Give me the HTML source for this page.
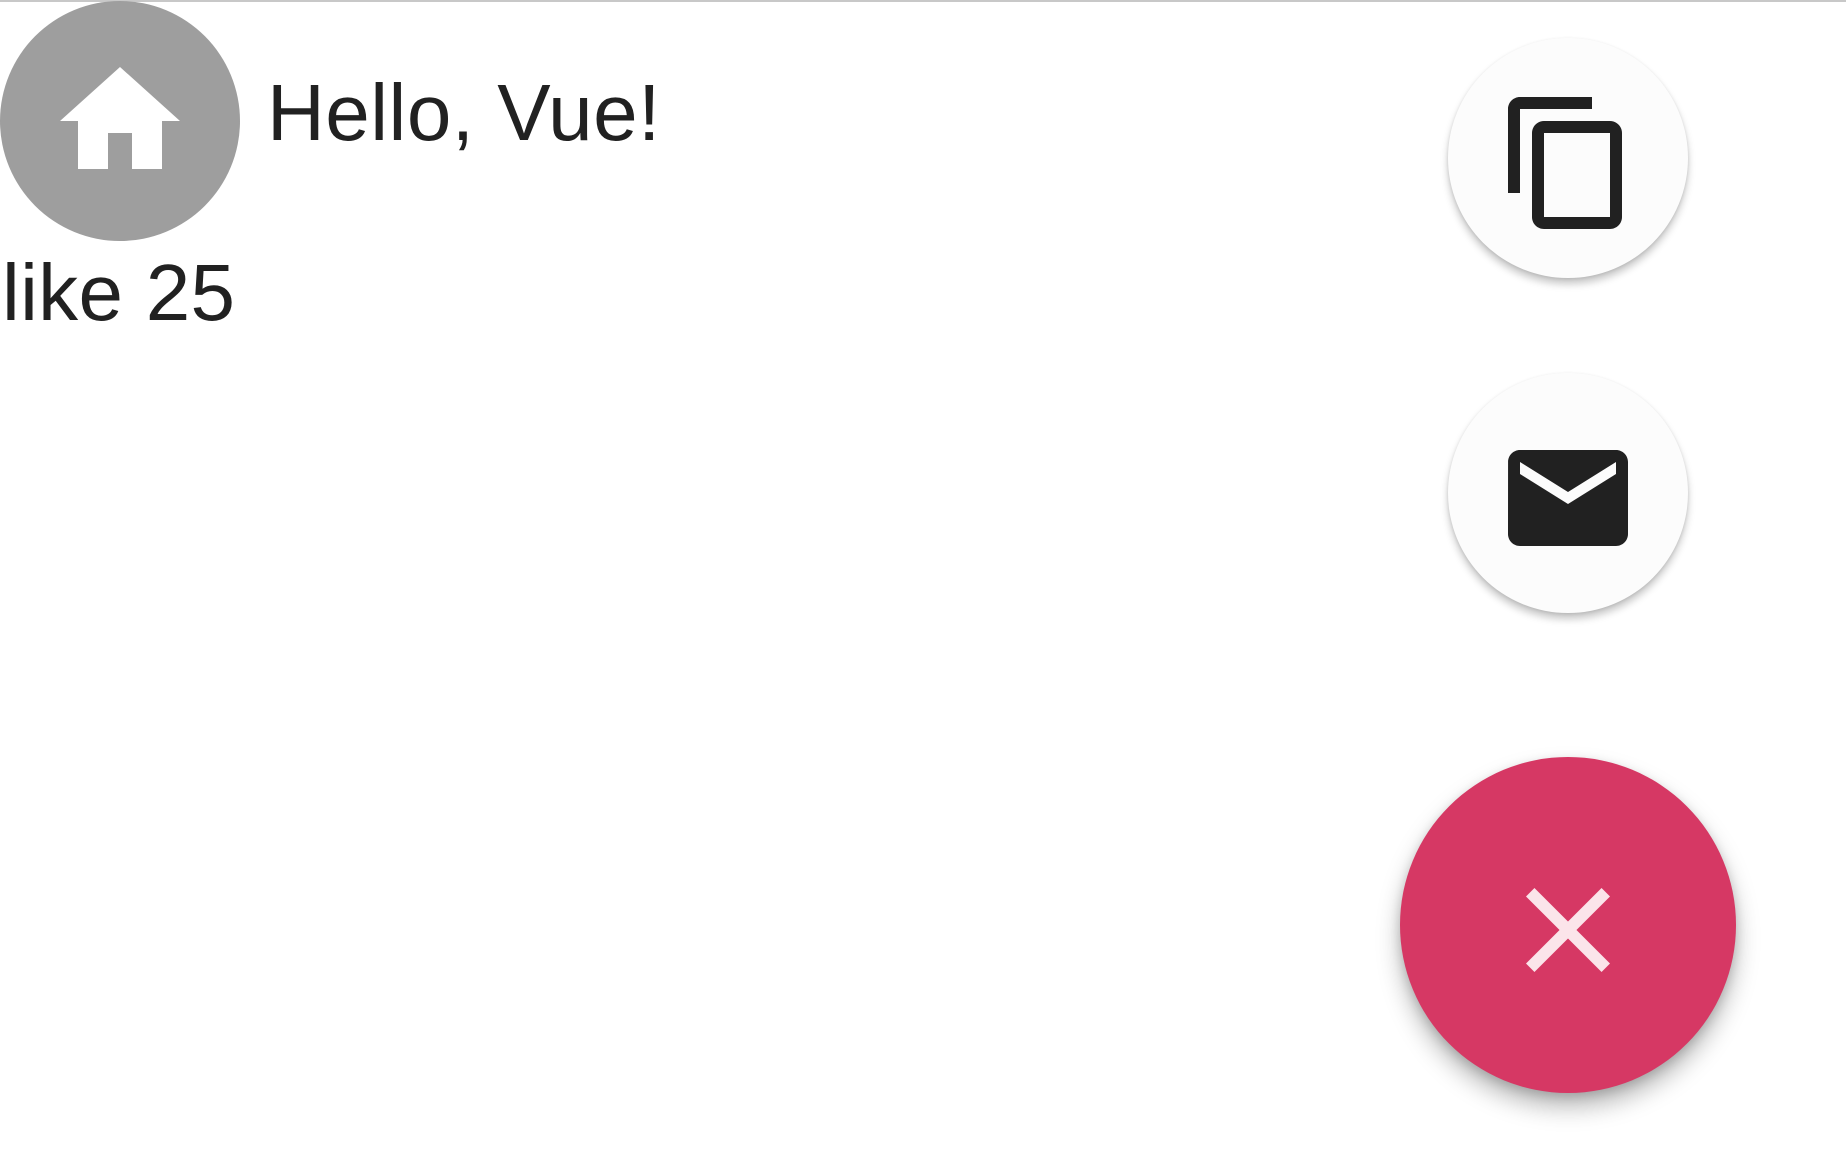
<!DOCTYPE html>
<html><head><style>
html,body{margin:0;padding:0;width:1846px;height:1168px;background:#fff;overflow:hidden;font-family:"Liberation Sans",sans-serif;color:#212121}
.top{position:absolute;left:0;top:0;width:1846px;height:2px;background:#c8c8c8}
.c{position:absolute;border-radius:50%;display:flex;align-items:center;justify-content:center}
.t{position:absolute;font-size:80px;line-height:1;white-space:nowrap}
svg{position:relative;top:5px}
</style></head><body>
<div class="top"></div>
<div class="c" style="left:0;top:1px;width:240px;height:240px;background:#9e9e9e">
<svg width="144" height="144" viewBox="0 0 24 24" style="top:0"><path fill="#fff" d="M10 20v-6h4v6h5v-8h3L12 3 2 12h3v8z"/></svg></div>
<div class="t" style="left:267px;top:73px;letter-spacing:0.5px">Hello, Vue!</div>
<div class="t" style="left:2px;top:253px;letter-spacing:0.3px">like 25</div>
<div class="c" style="left:1448px;top:38px;width:240px;height:240px;background:#fcfcfc;box-shadow:0 6px 8px rgba(0,0,0,.22),0 1px 3px rgba(0,0,0,.1)">
<svg width="144" height="144" viewBox="0 0 24 24"><path fill="#212121" d="M16 1H4c-1.1 0-2 .9-2 2v14h2V3h12V1zm3 4H8c-1.1 0-2 .9-2 2v14c0 1.1.9 2 2 2h11c1.1 0 2-.9 2-2V7c0-1.1-.9-2-2-2zm0 16H8V7h11v14z"/></svg></div>
<div class="c" style="left:1448px;top:373px;width:240px;height:240px;background:#fcfcfc;box-shadow:0 6px 8px rgba(0,0,0,.22),0 1px 3px rgba(0,0,0,.1)">
<svg width="144" height="144" viewBox="0 0 24 24"><path fill="#212121" d="M20 4H4c-1.1 0-1.99.9-1.99 2L2 18c0 1.1.9 2 2 2h16c1.1 0 2-.9 2-2V6c0-1.1-.9-2-2-2zm0 4l-8 5-8-5V6l8 5 8-5v2z"/></svg></div>
<div class="c" style="left:1400px;top:757px;width:336px;height:336px;background:#d63864;box-shadow:0 14px 24px rgba(0,0,0,.28),0 4px 10px rgba(0,0,0,.15)">
<svg width="144" height="144" viewBox="0 0 24 24"><path fill="#fbe4ea" d="M19 6.41L17.59 5 12 10.59 6.41 5 5 6.41 10.59 12 5 17.59 6.41 19 12 13.41 17.59 19 19 17.59 13.41 12z"/></svg></div>
</body></html>
